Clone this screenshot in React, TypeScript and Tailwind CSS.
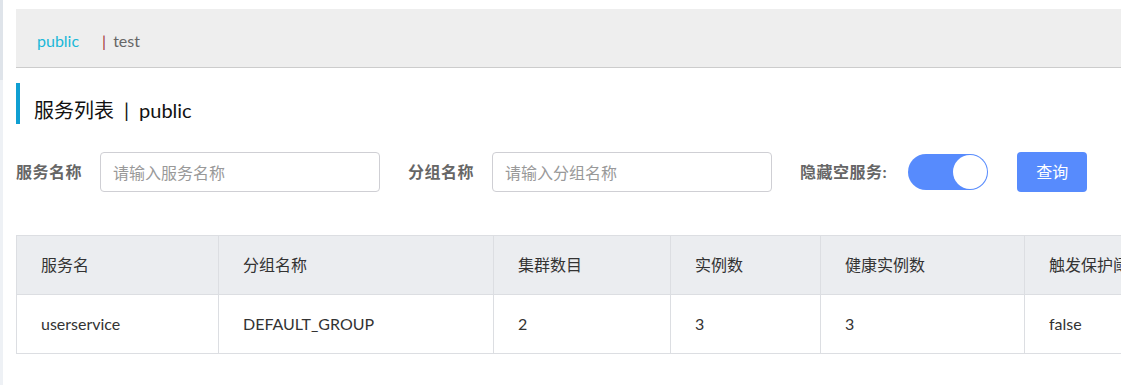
const FONT = '[font-family:"Lato","Noto_Sans_CJK_SC",sans-serif]';

const columns = [
  { title: '服务名', width: 'w-[202px]' },
  { title: '分组名称', width: 'w-[275px]' },
  { title: '集群数目', width: 'w-[177px]' },
  { title: '实例数', width: 'w-[150px]' },
  { title: '健康实例数', width: 'w-[204px]' },
  { title: '触发保护阈值', width: 'w-[200px]' },
];

const rows = [['userservice', 'DEFAULT_GROUP', '2', '3', '3', 'false']];

export default function App() {
  return (
    <div className={`flex h-[385px] w-[1121px] overflow-hidden bg-white ${FONT}`}>
      {/* sidebar edge */}
      <div className="flex w-[3px] shrink-0 flex-col">
        <div className="h-[80px] bg-[#dfe4ea]" />
        <div className="flex-1 bg-[#eef1f5]" />
      </div>

      <div className="ml-[13px] min-w-0 flex-1">
        {/* namespace bar */}
        <div className="mt-[9px] flex h-[59px] w-[1200px] items-center border-b border-[#cccccc] bg-[#eeeeee] pl-[21px] pt-[6px] text-[16px] leading-[20px]">
          <span className="text-[#1ab8d8]">public</span>
          <span className="ml-[23px] text-[#a0323c]">|</span>
          <span className="ml-[7px] text-[#666666]">test</span>
        </div>

        {/* page title */}
        <div className="mt-[15px] h-[41px] border-l-4 border-[#0f9fd2] pl-[14px] pt-[13px] text-[20px] leading-[28px] text-[#111111]">
          服务列表<span className="mx-[10px]">|</span>public
        </div>

        {/* filters */}
        <div className="mt-[28px] flex h-[40px] items-center text-[16px]">
          <label className="font-bold tracking-[0.5px] text-[#666666]">服务名称</label>
          <input
            className="ml-[18px] h-[40px] w-[280px] rounded border border-[#cfcfd4] px-[12px] text-[#333] outline-none placeholder:text-[#999999]"
            placeholder="请输入服务名称"
          />
          <label className="ml-[28px] font-bold tracking-[0.5px] text-[#666666]">分组名称</label>
          <input
            className="ml-[18px] h-[40px] w-[280px] rounded border border-[#cfcfd4] px-[12px] text-[#333] outline-none placeholder:text-[#999999]"
            placeholder="请输入分组名称"
          />
          <label className="ml-[28px] font-bold tracking-[0.5px] text-[#666666]">隐藏空服务:</label>
          <button className="ml-[21px] flex h-[36px] w-[80px] shrink-0 items-center justify-end rounded-full bg-[#578bfd] pr-[1px]">
            <span className="h-[34px] w-[34px] rounded-full bg-white" />
          </button>
          <button className="ml-[29px] h-[40px] w-[70px] shrink-0 rounded bg-[#578bfd] text-white">查询</button>
        </div>

        {/* service table */}
        <table className="mt-[43px] w-[1208px] table-fixed border-collapse text-[16px] text-[#333333]">
          <thead>
            <tr className="bg-[#ebedf0]">
              {columns.map((c) => (
                <th
                  key={c.title}
                  className={`${c.width} h-[59px] whitespace-nowrap border border-[#dcdee2] pl-[24px] text-left font-normal`}
                >
                  {c.title}
                </th>
              ))}
            </tr>
          </thead>
          <tbody>
            {rows.map((r, i) => (
              <tr key={i}>
                {r.map((cell, j) => (
                  <td key={j} className="h-[59px] whitespace-nowrap border border-[#dcdee2] pl-[24px]">
                    {cell}
                  </td>
                ))}
              </tr>
            ))}
          </tbody>
        </table>
      </div>
    </div>
  );
}
